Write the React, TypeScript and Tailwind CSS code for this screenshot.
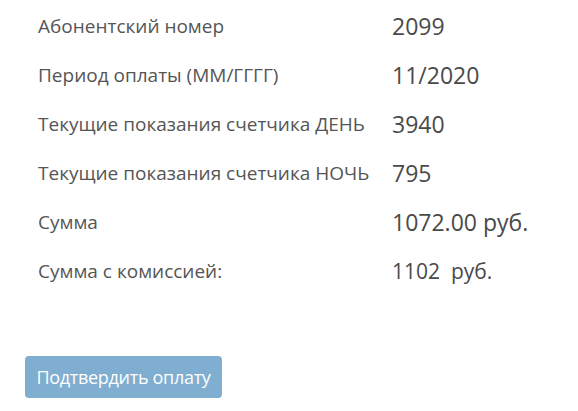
const ROWS = [
  { label: 'Абонентский номер', value: '2099' },
  { label: 'Период оплаты (ММ/ГГГГ)', value: '11/2020' },
  { label: 'Текущие показания счетчика ДЕНЬ', value: '3940' },
  { label: 'Текущие показания счетчика НОЧЬ', value: '795' },
  { label: 'Сумма', value: '1072.00 руб.' },
]

export default function App() {
  return (
    <div className="w-[578px] h-[411px] bg-white font-['Open_Sans',sans-serif] text-[#555]">
      <div className="pl-[38px] pt-[2px]">
        {ROWS.map(r => (
          <div key={r.label} className="flex items-center h-[49px]">
            <div className="w-[354px] text-[19px]">{r.label}</div>
            <div className="text-[23px] text-[#4a4a4a]">{r.value}</div>
          </div>
        ))}
        <div className="flex items-center h-[49px]">
          <div className="w-[354px] text-[19px]">Сумма с комиссией:</div>
          <div className="text-[21px] text-[#4a4a4a]">1102&nbsp; руб.</div>
        </div>
      </div>
      <div className="pl-[25px] pt-[60px]">
        <button className="h-[42px] w-[197px] rounded-[4px] bg-[#80aed0] text-white text-[18px] tracking-[-0.3px]">
          Подтвердить оплату
        </button>
      </div>
    </div>
  )
}
